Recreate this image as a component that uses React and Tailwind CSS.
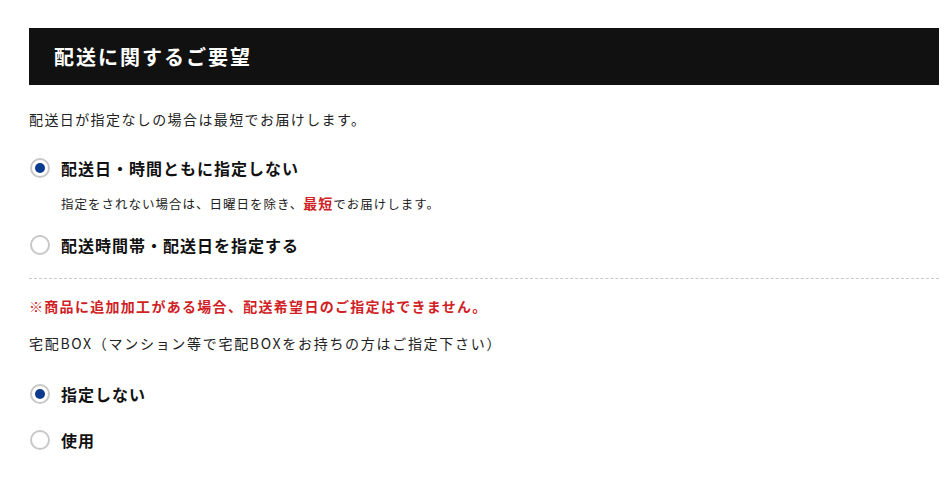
import React, { useState } from "react";

const font = { fontFamily: '"Noto Sans CJK JP", "Noto Sans", sans-serif' };

function Radio({ checked, onClick, children }) {
    return (
        <label className="flex h-[28px] cursor-pointer items-center" onClick={onClick}>
            <span className="ml-[1px] flex h-[20px] w-[20px] items-center justify-center rounded-full border-2 border-[#c8c8c8] bg-white">
                {checked && <span className="h-[10px] w-[10px] rounded-full bg-[#0b3a8f]"></span>}
            </span>
            <span className="ml-[11px] text-[16px] font-bold tracking-[1px] text-[#111]">{children}</span>
        </label>
    );
}

function App() {
    const [delivery, setDelivery] = useState("none");
    const [box, setBox] = useState("none");

    return (
        <div className="min-h-[484px] bg-white" style={font}>
            <div className="w-[910px] pl-[29px] pt-[28px] box-content">
                <div className="flex h-[57px] items-center bg-[#111111] pl-[25px]">
                    <h2 className="text-[20px] font-bold tracking-[2px] text-white">配送に関するご要望</h2>
                </div>

                <p className="mt-[22px] text-[14px] leading-[24px] tracking-[1.4px] text-[#222]">
                    配送日が指定なしの場合は最短でお届けします。
                </p>

                <div className="mt-[23px]">
                    <Radio checked={delivery === "none"} onClick={() => setDelivery("none")}>
                        配送日・時間ともに指定しない
                    </Radio>
                </div>
                <p className="mt-[11px] pl-[32px] text-[12.5px] leading-[20px] tracking-[1px] text-[#222]">
                    指定をされない場合は、日曜日を除き、
                    <span className="text-[14px] font-bold text-[#d01f26]">最短</span>
                    でお届けします。
                </p>
                <div className="mt-[17px]">
                    <Radio checked={delivery === "set"} onClick={() => setDelivery("set")}>
                        配送時間帯・配送日を指定する
                    </Radio>
                </div>

                <div className="mt-[19px] border-t border-dashed border-[#c8c8c8]"></div>

                <p className="mt-[15px] text-[14px] font-bold leading-[24px] tracking-[1.3px] text-[#d01f26]">
                    ※商品に追加加工がある場合、配送希望日のご指定はできません。
                </p>
                <p className="mt-[13px] text-[14px] leading-[24px] tracking-[1.7px] text-[#222]">
                    宅配BOX（マンション等で宅配BOXをお持ちの方はご指定下さい）
                </p>

                <div className="mt-[25px]">
                    <Radio checked={box === "none"} onClick={() => setBox("none")}>
                        指定しない
                    </Radio>
                </div>
                <div className="mt-[18px]">
                    <Radio checked={box === "use"} onClick={() => setBox("use")}>
                        使用
                    </Radio>
                </div>
            </div>
        </div>
    );
}

export default App;
